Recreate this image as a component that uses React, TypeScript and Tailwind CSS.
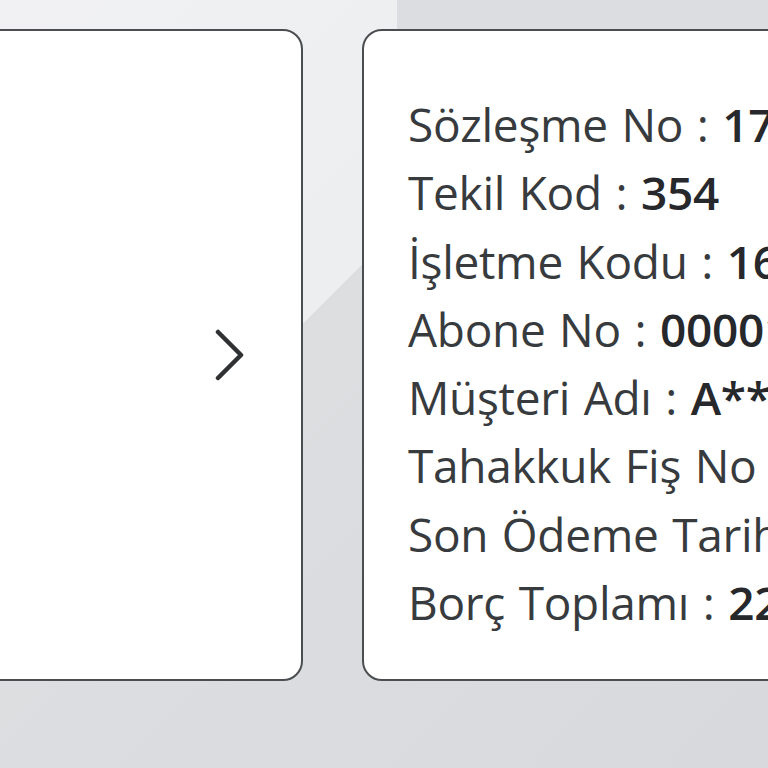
import React from 'react'

const rows = [
  { label: 'Sözleşme No', value: '1700245' },
  { label: 'Tekil Kod', value: '354' },
  { label: 'İşletme Kodu', value: '16034' },
  { label: 'Abone No', value: '000012871' },
  { label: 'Müşteri Adı', value: 'A*** Y****' },
  { label: 'Tahakkuk Fiş No', value: '40512873' },
  { label: 'Son Ödeme Tarihi', value: '14.03.2024' },
  { label: 'Borç Toplamı', value: '225,40 TL' },
]

function ChevronRight() {
  return (
    <svg width="32" height="52" viewBox="0 0 32 52" fill="none">
      <path d="M4 3 L27 26 L4 49" stroke="#2f3133" strokeWidth="4.5" strokeLinecap="round" strokeLinejoin="round" />
    </svg>
  )
}

export default function App() {
  return (
    <div
      className="w-[768px] h-[768px] overflow-hidden bg-[linear-gradient(135deg,#f1f1f3_0%,#eceef0_40.8%,#dcdee0_40.8%,#d7d9dc_100%)]"
      style={{ fontFamily: '"Open Sans", "Noto Sans", sans-serif' }}
    >
      <div className="h-[29px] flex">
        <div className="w-[397px]" />
        <div className="flex-1 bg-[#dcdde0]" />
      </div>
      <div className="flex gap-[59px]">
        <div className="ml-[-30px] w-[333px] h-[652px] shrink-0 bg-white border-2 border-[#4b4d50] rounded-[20px] flex items-center justify-end pr-[55px]">
          <ChevronRight />
        </div>
        <div className="w-[520px] h-[652px] shrink-0 bg-white border-2 border-[#4b4d50] rounded-[20px] overflow-hidden pt-[59px] pl-[44px]">
          {rows.map((r) => (
            <div key={r.label} className="whitespace-nowrap text-[46px] leading-[68.3px] tracking-[-0.3px] [word-spacing:2px] text-[#383b3e]">
              {r.label} : <span className="font-semibold text-[#26282b]">{r.value}</span>
            </div>
          ))}
        </div>
      </div>
    </div>
  )
}
